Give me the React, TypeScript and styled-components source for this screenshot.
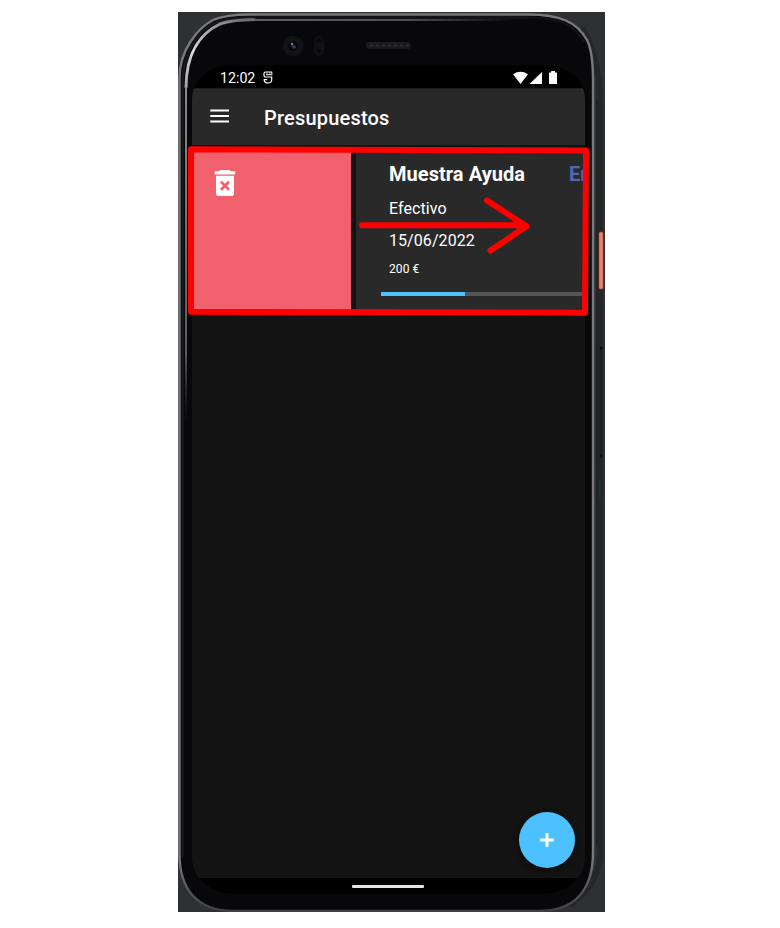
import React from 'react';
import styled, { createGlobalStyle } from 'styled-components';

const GlobalStyle = createGlobalStyle`
  * { box-sizing: border-box; }
  body { margin: 0; background: #fff; font-family: Roboto, "Liberation Sans", sans-serif; }
`;

const Page = styled.main`
  height: 928px;
  padding: 12px 0 0 178px;
  overflow: hidden;
`;

const Device = styled.div`
  position: relative;
  width: 427px;
  height: 900px;
  padding: 53px 20px 18px 14px;
  background: #2f3032;
  overflow: hidden;
`;

const Layer = styled.svg`
  position: absolute;
  inset: 0;
  pointer-events: none;
`;

const Screen = styled.section`
  position: relative;
  display: flex;
  flex-direction: column;
  width: 393px;
  height: 829px;
  overflow: hidden;
  border-radius: 38px 38px 42px 42px / 34px 34px 36px 36px;
  background: #131313;
  color: #fff;
`;

const StatusBar = styled.div`
  display: flex;
  align-items: center;
  height: 23px;
  flex: none;
  padding: 2px 27px 0 28px;
  background: #000;
`;

const Clock = styled.span`
  width: 43px;
  font-size: 14.2px;
  line-height: 20px;
`;

const StatusIcons = styled.div`
  display: flex;
  margin-left: auto;
`;

const AppBar = styled.header`
  display: flex;
  align-items: center;
  height: 57px;
  flex: none;
  padding: 0 18px 1px;
  border-top: 1px solid #1c1c1c;
  background: #292929;
`;

const MenuIcon = styled.svg`
  width: 20px;
  height: 16px;
  margin-bottom: 2px;
`;

const Title = styled.h1`
  margin: 3px 0 0 34px;
  font-size: 20px;
  line-height: 28px;
  font-weight: 500;
  letter-spacing: 0.2px;
`;

const SwipeRow = styled.div`
  display: flex;
  height: 159px;
  flex: none;
  margin-top: 7px;
`;

const DeleteAction = styled.div`
  width: 159px;
  flex: none;
  padding: 17px 0 0 22px;
  background: #f1606d;
`;

const Card = styled.article`
  width: 393px;
  flex: none;
  margin-left: 5px;
  padding: 8px 25px 0;
  background: #292929;
`;

const CardHead = styled.div`
  display: flex;
  padding-left: 8px;
  font-size: 20px;
  line-height: 29px;
  font-weight: 700;
  letter-spacing: 0.05px;
`;

const Name = styled.span`
  width: 180px;
  white-space: nowrap;
`;

const State = styled.span`
  color: #4f69b0;
`;

const Detail = styled.p<{ $size: number; $height: number }>`
  margin: 0;
  padding-left: 8px;
  font-size: ${p => p.$size}px;
  line-height: ${p => p.$height}px;
  letter-spacing: 0.07px;
`;

const Track = styled.div`
  height: 4px;
  margin-top: 7px;
  background: #555;
`;

const Progress = styled.div`
  width: 84px;
  height: 4px;
  background: #4dc1ff;
`;

const Body = styled.div`
  display: flex;
  flex: 1;
  align-items: flex-end;
  justify-content: flex-end;
  padding: 0 10px 10px;
`;

const AddButton = styled.button`
  display: grid;
  place-items: center;
  width: 56.5px;
  height: 56.5px;
  padding: 0;
  border: 0;
  border-radius: 50%;
  background: #4dc1ff;
  box-shadow: 0 3px 7px rgba(0, 0, 0, 0.45);
`;

const NavBar = styled.div`
  display: flex;
  justify-content: center;
  height: 16px;
  flex: none;
  padding: 7px 1px 0 0;
  background: #000;
`;

const Handle = styled.div`
  width: 72px;
  height: 3px;
  border-radius: 1px;
  background: #e7e3e6;
`;

const DeviceFrame = () => (
  <Layer width="427" height="900" viewBox="0 0 427 900" fill="none">
    <defs>
      <linearGradient id="rim" x1="0" y1="0" x2="0" y2="900" gradientUnits="userSpaceOnUse">
        <stop offset="0" stopColor="#77797d" />
        <stop offset=".94" stopColor="#77797b" />
        <stop offset="1" stopColor="#3e3f41" />
      </linearGradient>
      <linearGradient id="shine" x1="4" y1="170" x2="75" y2="0" gradientUnits="userSpaceOnUse">
        <stop offset="0" stopColor="#777" />
        <stop offset=".45" stopColor="#999" />
        <stop offset=".68" stopColor="#dadad8" />
        <stop offset="1" stopColor="#5c5c5c" />
      </linearGradient>
      <linearGradient id="top" x1="60" y1="0" x2="340" y2="0" gradientUnits="userSpaceOnUse">
        <stop offset="0" stopColor="#626262" />
        <stop offset=".6" stopColor="#505050" />
        <stop offset="1" stopColor="#555" stopOpacity="0" />
      </linearGradient>
      <linearGradient id="fade" x1="0" y1="60" x2="0" y2="410" gradientUnits="userSpaceOnUse">
        <stop offset="0" stopColor="#8c8c8c" />
        <stop offset=".8" stopColor="#5a5b5c" />
        <stop offset="1" stopColor="#404040" stopOpacity="0" />
      </linearGradient>
      <radialGradient id="lens">
        <stop stopColor="#202533" />
        <stop offset=".5" stopColor="#050507" />
        <stop offset="1" stopColor="#18191a" />
      </radialGradient>
    </defs>
    <path d="M404 16Q422 44 422 92V844Q420 872 392 893" stroke="#252628" strokeWidth="6" />
    <path d="M1.5 845V66C1.5 38 20 16 35 8Q48 2.5 72 2.5H350C382 2.5 399 10 409 28Q415 40 415 68V840C415 868 405 899 360 899H56C18 899 1.5 876 1.5 842Z" fill="#08080a" stroke="url(#rim)" strokeWidth="2.4" />
    <path d="M4.5 845V72C4.5 40 20 20 35 12Q48 5.5 72 5.5H350" stroke="#18191b" strokeWidth="2.4" />
    <path d="M8 76C8 38 25 20 42 12Q52 8 78 7.5" stroke="url(#shine)" strokeWidth="3" />
    <path d="M8 75V410" stroke="url(#fade)" strokeWidth="2" />
    <path d="M77 8H340" stroke="url(#top)" strokeWidth="2" />
    <path d="M76 5.5H352C382 5.5 398 14 406 30" stroke="#141416" strokeWidth="2" />
    <path d="M419 88V834" stroke="#202123" strokeWidth="1.5" />
    <rect x="421" y="220" width="4" height="57" rx="1.5" fill="#ef8069" stroke="#a84d3b" strokeWidth=".6" />
    <path d="M423 337V443" stroke="#1e1f20" strokeWidth="3" />
    <path d="M423 334.5v3M423 442.5v3" stroke="#0b0c0d" strokeWidth="2.5" />
    <path d="M422 468v18" stroke="#293b3a" />
    <circle cx="115" cy="34" r="10.5" fill="#111213" />
    <circle cx="115" cy="34" r="7" fill="url(#lens)" />
    <circle cx="114" cy="32" r="1.2" fill="#74788a" />
    <circle cx="116" cy="35" r="1.8" fill="#303c60" />
    <rect x="136" y="24" width="10" height="20" rx="5" fill="#101112" />
    <circle cx="141" cy="28.5" r="3.2" fill="#08090a" stroke="#151617" />
    <circle cx="141" cy="39" r="3.2" fill="#08090a" stroke="#151617" />
    <rect x="188" y="30" width="45" height="7" rx="3.5" fill="#1a1b1c" />
    <path d="M192 33.5H231" stroke="#2c2c2d" strokeWidth="2" strokeDasharray="3 3" />
  </Layer>
);

const DebugIcon = () => (
  <svg width="10" height="13" viewBox="0 0 10 13" fill="none" stroke="#fff" strokeWidth="1.2">
    <path d="M9.2 1H2.6Q1 1 1 2.6V4.4Q1 6 2.6 6H8.7V8.5Q8.7 12 5 12Q1.2 12 1.2 8.7H4.2" />
    <path d="M3 3.7H8M4 1.5V2.7M6.8 1.5V2.7M8.8 1V4.5" strokeWidth="1" />
  </svg>
);

export default function App() {
  return (
    <Page>
      <GlobalStyle />
      <Device>
        <DeviceFrame />
        <Screen>
          <StatusBar>
            <Clock>12:02</Clock>
            <DebugIcon />
            <StatusIcons>
              <svg width="45" height="14" viewBox="0 0 45 14" fill="#fff">
                <path d="M0 3.2Q7.5-1.5 15 3.2L7.5 13Z" />
                <path d="M29 1V13H16.5Z" />
                <path d="M38.2 0H42V1.5H43.5Q44 1.5 44 2V12.5Q44 13 43.5 13H36.5Q36 13 36 12.5V2Q36 1.5 36.5 1.5H38.2Z" />
              </svg>
            </StatusIcons>
          </StatusBar>
          <AppBar>
            <MenuIcon viewBox="0 0 20 16" fill="none" stroke="#fff" strokeWidth="2">
              <path d="M.3 2.5H19M.3 8H19M.3 13.5H19" />
            </MenuIcon>
            <Title>Presupuestos</Title>
          </AppBar>
          <SwipeRow>
            <DeleteAction>
              <svg width="22" height="28" viewBox="0 0 22 28">
                <path fill="#fff" d="M6.5 1H15.5L17 2.3H21.3V5.5H.7V2.3H5ZM2 6.7H20V24.2Q20 27 17.2 27H4.8Q2 27 2 24.2Z" />
                <path d="M7 12.8L15 20.8M15 12.8L7 20.8" stroke="#f1606d" strokeWidth="2.7" />
              </svg>
            </DeleteAction>
            <Card>
              <CardHead>
                <Name>Muestra Ayuda</Name>
                <State>En</State>
              </CardHead>
              <Detail $size={16} $height={40}>Efectivo</Detail>
              <Detail $size={16} $height={24}>15/06/2022</Detail>
              <Detail $size={12} $height={32}>200 €</Detail>
              <Track><Progress /></Track>
            </Card>
          </SwipeRow>
          <Body>
            <AddButton aria-label="+">
              <svg width="14" height="14" viewBox="0 0 14 14" stroke="#fff" strokeWidth="3">
                <path d="M7 .3V13.7M.3 7H13.7" />
              </svg>
            </AddButton>
          </Body>
          <NavBar><Handle /></NavBar>
        </Screen>
        <Layer width="427" height="900" viewBox="0 0 427 900" fill="none" stroke="#f00" strokeWidth="6" strokeLinecap="round" strokeLinejoin="round">
          <path d="M13 137.2L408 138.5L407 300.8L13 299.8Z" />
          <path d="M184 213.3H346M309 188.5L348.5 214.3L312.5 238.5" />
        </Layer>
      </Device>
    </Page>
  );
}
